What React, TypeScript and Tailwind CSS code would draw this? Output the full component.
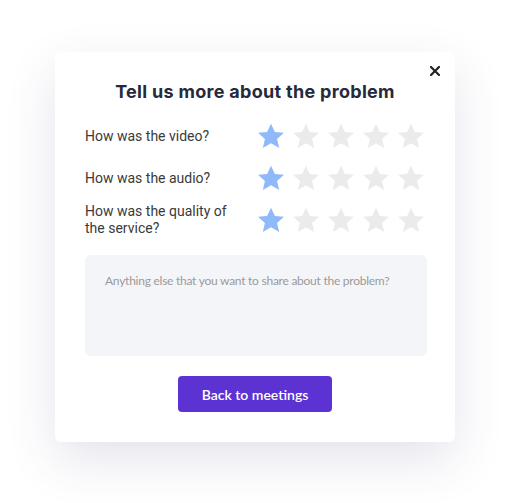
import React from 'react'

const questions = ['How was the video?', 'How was the audio?', 'How was the quality of the service?']

const Star = ({ filled }: { filled: boolean }) => (
  <svg viewBox="0 0 24 24" className="w-[28px] h-[28px]">
    <path
      d="M12 1.4l3.3 7.1 7.8.8-5.9 5.2 1.8 7.8L12 18.2l-7 4.1 1.8-7.8-5.9-5.2 7.8-.8z"
      fill={filled ? '#8fb9f9' : '#ebebeb'}
    />
  </svg>
)

export default function App() {
  return (
    <div className="w-[513px] h-[503px] bg-white pt-[52px] pl-[55px]">
      <div className="relative w-[400px] bg-white rounded-[6px] shadow-[0_18px_50px_rgba(70,60,110,0.14)] px-[30px] pt-[28px] pb-[30px]">
        <button className="absolute right-[15px] top-[14px] w-[10px] h-[10px] flex items-center justify-center" aria-label="Close">
          <svg viewBox="0 0 10 10" className="w-[10px] h-[10px]">
            <path d="M1 1l8 8M9 1l-8 8" stroke="#222" strokeWidth="2.2" strokeLinecap="square" />
          </svg>
        </button>

        <h2 className="text-center text-[18px] leading-[24px] font-bold text-[#262a3b] tracking-[0.3px] font-['Inter',sans-serif]">
          Tell us more about the problem
        </h2>

        <div className="flex flex-col gap-2 mt-[15px]">
          {questions.map((q) => (
            <div key={q} className="flex items-center min-h-[34px]">
              <p className="w-[173px] pr-4 text-[14px] leading-[17px] text-[#3a3a3a] font-['Roboto',sans-serif]">{q}</p>
              <div className="flex gap-[7px]">
                {[0, 1, 2, 3, 4].map((i) => (
                  <Star key={i} filled={i === 0} />
                ))}
              </div>
            </div>
          ))}
        </div>

        <textarea
          placeholder="Anything else that you want to share about the problem?"
          className="block w-[342px] h-[101px] mt-[18px] resize-none rounded-[6px] bg-[#f4f5f9] pl-5 pr-3 pt-[17px] text-[12px] leading-[17px] tracking-[-0.25px] text-[#555] placeholder:text-[#9a9a9a] outline-none font-['Lato',sans-serif]"
        />

        <div className="flex justify-center mt-5">
          <button className="w-[154px] h-[36px] rounded-[4px] bg-[#5c32d2] text-white text-[14px] font-semibold font-['Lato',sans-serif]">
            Back to meetings
          </button>
        </div>
      </div>
    </div>
  )
}
